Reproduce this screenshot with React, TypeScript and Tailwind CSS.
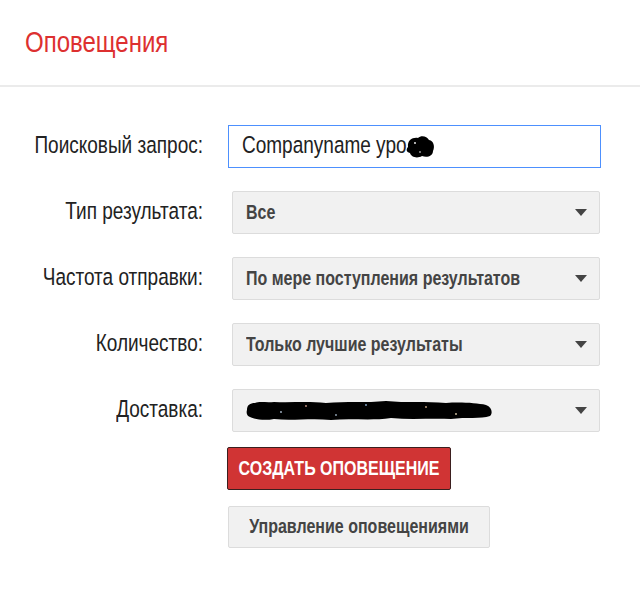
import React from "react";

const font = { fontFamily: '"Liberation Sans", Arial, sans-serif' };

function T({ children }: { children: React.ReactNode }) {
  return <span className="inline-block origin-center scale-y-125">{children}</span>;
}

function Arrow() {
  return (
    <svg width="12" height="7" viewBox="0 0 12 7" className="shrink-0">
      <path d="M0 0 L12 0 L6 7 Z" fill="#444" />
    </svg>
  );
}

function Select({ children }: { children: React.ReactNode }) {
  return (
    <div className="ml-[4px] flex h-[43px] w-[368px] items-center justify-between rounded-[2px] border border-[#dcdcdc] bg-[#f1f1f1] pl-[13px] pr-[12px] text-[16px] font-bold text-[#444]">
      <span className="flex items-center">{children}</span>
      <Arrow />
    </div>
  );
}

function Row({ label, children }: { label: string; children: React.ReactNode }) {
  return (
    <div className="flex items-center">
      <div className="w-[203px] shrink-0 text-right text-[19px] text-[#222]">
        <T>{label}</T>
      </div>
      <div className="ml-[25px]">{children}</div>
    </div>
  );
}

export default function App() {
  return (
    <div className="min-h-[604px] w-[640px] bg-white" style={font}>
      <div className="h-[87px] border-b-2 border-[#ebebeb] pl-[25px] pt-[30px]">
        <h1 className="text-[24px] leading-none text-[#dd3030]">
          <T>Оповещения</T>
        </h1>
      </div>
      <div className="flex flex-col gap-[23px] pt-[38px]">
        <Row label="Поисковый запрос:">
          <div className="flex h-[43px] w-[373px] items-center border border-[#4d90fe] bg-white pl-[13px] text-[19px] text-[#222]">
            <T>Companyname уро</T>
            <svg width="30" height="24" viewBox="0 0 30 24" className="-ml-[2px]">
              <path
                d="M3 12 C2 5 8 2 13 3 C16 0 22 1 24 5 C29 6 30 12 28 16 C28 21 22 23 17 21 C12 24 6 22 5 18 C1 17 1 14 3 12 Z"
                fill="#000"
              />
              <circle cx="10" cy="8" r="0.9" fill="#fff" />
              <circle cx="15" cy="17" r="0.8" fill="#fff" />
            </svg>
          </div>
        </Row>
        <Row label="Тип результата:">
          <Select>
            <T>Все</T>
          </Select>
        </Row>
        <Row label="Частота отправки:">
          <Select>
            <T>По мере поступления результатов</T>
          </Select>
        </Row>
        <Row label="Количество:">
          <Select>
            <T>Только лучшие результаты</T>
          </Select>
        </Row>
        <Row label="Доставка:">
          <Select>
            <svg width="247" height="22" viewBox="0 0 247 22">
              <path
                d="M1 10 C1 5 4 3 9 3 C14 1 20 3 28 2 C45 3 60 1 80 3 C100 1 120 3 140 1 C160 3 180 1 200 3 C215 2 230 3 240 5 C246 7 247 13 244 16 C235 19 220 17 205 19 C185 18 165 20 145 18 C125 21 105 18 85 20 C65 18 45 21 28 19 C18 21 8 19 4 17 C1 16 0 13 1 10 Z"
                fill="#000"
              />
              <circle cx="60" cy="6" r="0.9" fill="#c98" />
              <circle cx="120" cy="5" r="0.9" fill="#8ac" />
              <circle cx="180" cy="7" r="0.9" fill="#ca8" />
              <circle cx="90" cy="15" r="0.9" fill="#9ab" />
              <circle cx="210" cy="14" r="0.9" fill="#dca" />
              <circle cx="35" cy="12" r="0.9" fill="#abc" />
            </svg>
          </Select>
        </Row>
      </div>
      <div className="ml-[227px] mt-[15px] flex flex-col items-start gap-[16px]">
        <button className="flex h-[43px] w-[224px] items-center justify-center rounded-[2px] border border-[#3b1f1f] bg-[#d03434] text-[16px] font-bold text-white">
          <T>СОЗДАТЬ ОПОВЕЩЕНИЕ</T>
        </button>
        <button className="ml-[1px] flex h-[42px] w-[262px] items-center justify-center rounded-[2px] border border-[#dcdcdc] bg-[#f1f1f1] text-[16px] font-bold text-[#444]">
          <T>Управление оповещениями</T>
        </button>
      </div>
    </div>
  );
}
